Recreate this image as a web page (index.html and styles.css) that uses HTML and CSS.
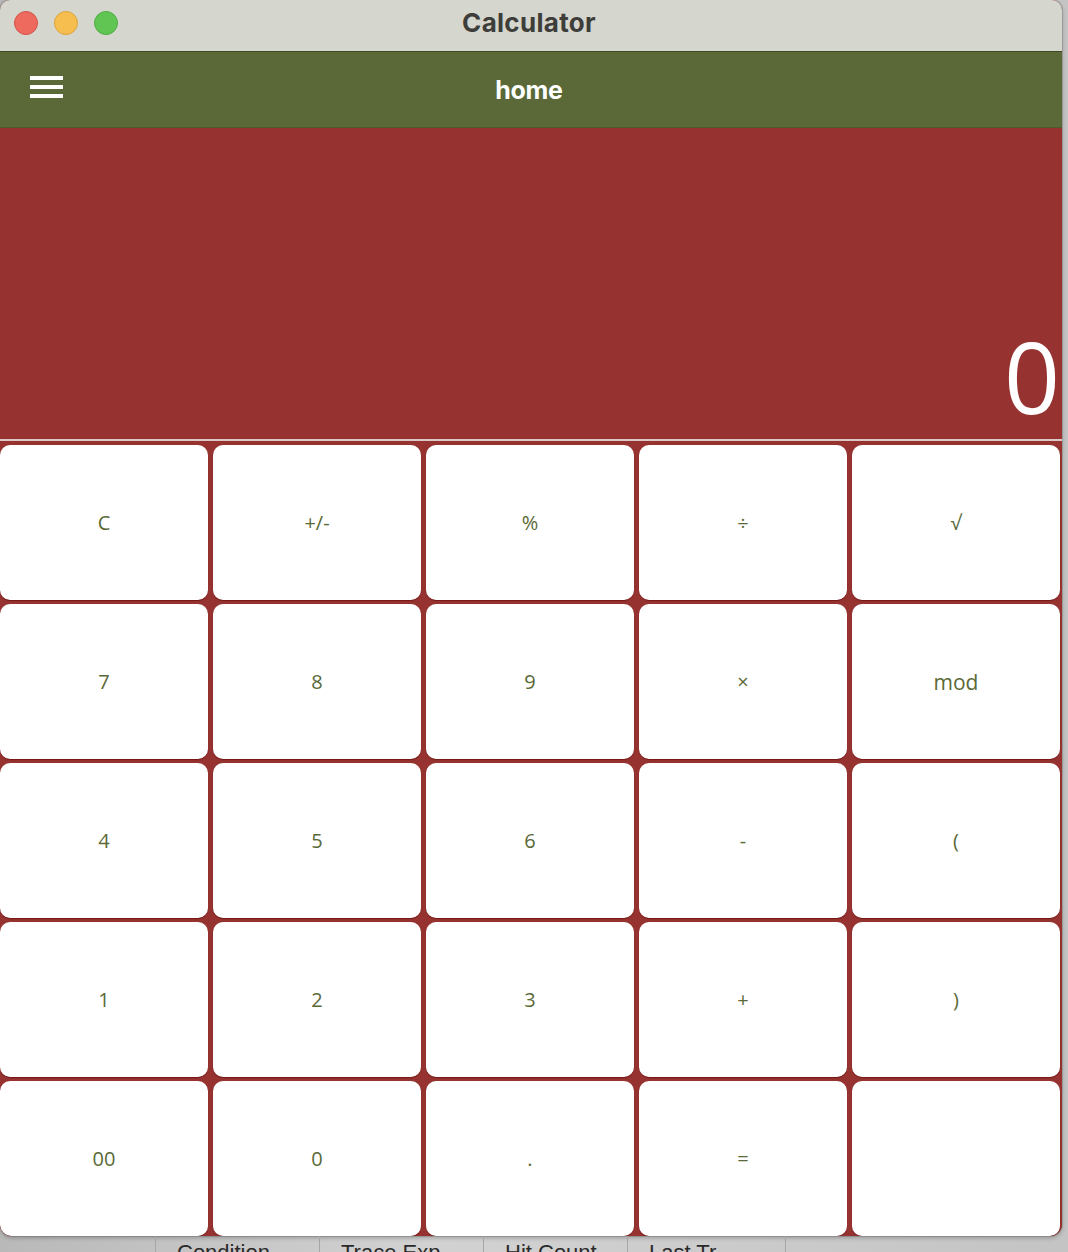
FILE: index.html
```html
<!DOCTYPE html>
<html>
<head>
<meta charset="utf-8">
<link rel="stylesheet" href="styles.css">
</head>
<body>
<div class="desk">
  <div class="window">
    <div class="titlebar">
      <div class="lights">
        <span class="light red"></span>
        <span class="light yellow"></span>
        <span class="light green"></span>
      </div>
      <div class="title">Calculator</div>
    </div>
    <div class="appbar">
      <svg class="menu" width="34" height="24" viewBox="0 0 34 24">
        <rect x="0" y="2" width="33" height="4" fill="#fff"/>
        <rect x="0" y="11" width="33" height="4" fill="#fff"/>
        <rect x="0" y="20" width="33" height="4" fill="#fff"/>
      </svg>
      <div class="apptitle">home</div>
    </div>
    <div class="display"><span class="value">0</span></div>
    <div class="sep"></div>
    <div class="keypad">
      <button class="key">C</button>
      <button class="key">+/-</button>
      <button class="key">%</button>
      <button class="key">÷</button>
      <button class="key">√</button>
      <button class="key">7</button>
      <button class="key">8</button>
      <button class="key">9</button>
      <button class="key">×</button>
      <button class="key big">mod</button>
      <button class="key">4</button>
      <button class="key">5</button>
      <button class="key">6</button>
      <button class="key">-</button>
      <button class="key">(</button>
      <button class="key">1</button>
      <button class="key">2</button>
      <button class="key">3</button>
      <button class="key">+</button>
      <button class="key">)</button>
      <button class="key">00</button>
      <button class="key">0</button>
      <button class="key">.</button>
      <button class="key">=</button>
      <button class="key last"></button>
    </div>
  </div>
  <div class="behind">
    <div class="cols">
      <span class="col c0"></span>
      <span class="col c1">Condition</span>
      <span class="col c2">Trace Exp</span>
      <span class="col c3">Hit Count</span>
      <span class="col c4">Last Tr</span>
    </div>
  </div>
</div>
</body>
</html>
```

FILE: styles.css
```css
* { box-sizing: border-box; }
html, body {
  margin: 0;
  padding: 0;
  width: 1068px;
  height: 1252px;
  overflow: hidden;
}
body {
  background: linear-gradient(90deg, #b9b9b9, #d2d2d2 40%, #c4c4c4);
  font-family: "Open Sans", "Liberation Sans", sans-serif;
}
.desk {
  width: 1068px;
  height: 1252px;
  display: flex;
  flex-direction: column;
}
.window {
  width: 1062px;
  height: 1236px;
  border-radius: 10px 10px 12px 12px;
  overflow: hidden;
  background: #963330;
  display: flex;
  flex-direction: column;
  box-shadow: 0 0 0 1px rgba(0,0,0,0.12), 0 2px 4px rgba(0,0,0,0.25);
  flex: none;
}
.titlebar {
  height: 52px;
  background: #d5d6ce;
  position: relative;
  display: flex;
  align-items: center;
  justify-content: center;
  border-bottom: 1px solid #3e4a22;
  flex: none;
}
.lights {
  position: absolute;
  left: 14px;
  top: 11px;
  display: flex;
  gap: 16px;
}
.light {
  width: 24px;
  height: 24px;
  border-radius: 50%;
  display: block;
}
.light.red { background: #ee6a5e; border: 1px solid #d35248; }
.light.yellow { background: #f6be4f; border: 1px solid #dea43a; }
.light.green { background: #61c554; border: 1px solid #4ead43; }
.title {
  font-family: Inter, "Liberation Sans", sans-serif;
  font-weight: 700;
  font-size: 26px;
  color: #3d3d3a;
  margin-top: -6px;
  margin-left: -4px;
  letter-spacing: 0.3px;
}
.appbar {
  height: 76px;
  background: #5a6937;
  position: relative;
  display: flex;
  align-items: center;
  justify-content: center;
  flex: none;
  border-bottom: 1px solid #4e5b2e;
}
.menu {
  position: absolute;
  left: 30px;
  top: 22px;
}
.apptitle {
  font-family: Inter, "Liberation Sans", sans-serif;
  font-weight: 700;
  font-size: 25px;
  color: #ffffff;
  margin-left: -4px;
  letter-spacing: -0.3px;
}
.display {
  height: 311px;
  background: #963330;
  display: flex;
  align-items: flex-end;
  justify-content: flex-end;
  padding-right: 2px;
  flex: none;
}
.value {
  font-family: "Open Sans", "Liberation Sans", sans-serif;
  font-weight: 400;
  font-size: 98px;
  line-height: 1;
  color: #ffffff;
  margin-bottom: 14px;
}
.sep {
  height: 2px;
  background: #dcc8c6;
  flex: none;
}
.keypad {
  flex: 1;
  display: grid;
  grid-template-columns: repeat(5, 208px);
  grid-template-rows: repeat(5, 155px);
  column-gap: 5px;
  row-gap: 4px;
  padding-top: 4px;
  background: #963330;
}
.key {
  border: none;
  margin: 0;
  padding: 0;
  background: #ffffff;
  border-radius: 10px;
  font-family: "Open Sans", "Liberation Sans", sans-serif;
  font-size: 20px;
  color: #5a6937;
  box-shadow: 0 1px 1px rgba(90,0,0,0.55);
  display: flex;
  align-items: center;
  justify-content: center;
}
.key.big { font-size: 21px; }
.behind {
  height: 16px;
  overflow: hidden;
  flex: none;
}
.cols {
  display: flex;
  height: 16px;
}
.col {
  display: block;
  height: 30px;
  border-right: 1px solid #a6a6a6;
  font-family: "Liberation Sans", Arial, sans-serif;
  font-size: 22px;
  color: #2a2a2a;
  padding-left: 21px;
  padding-top: 4px;
  white-space: nowrap;
  overflow: hidden;
}
.c0 { width: 156px; padding-left: 0; }
.c1 { width: 164px; }
.c2 { width: 164px; }
.c3 { width: 144px; }
.c4 { width: 158px; }
```
